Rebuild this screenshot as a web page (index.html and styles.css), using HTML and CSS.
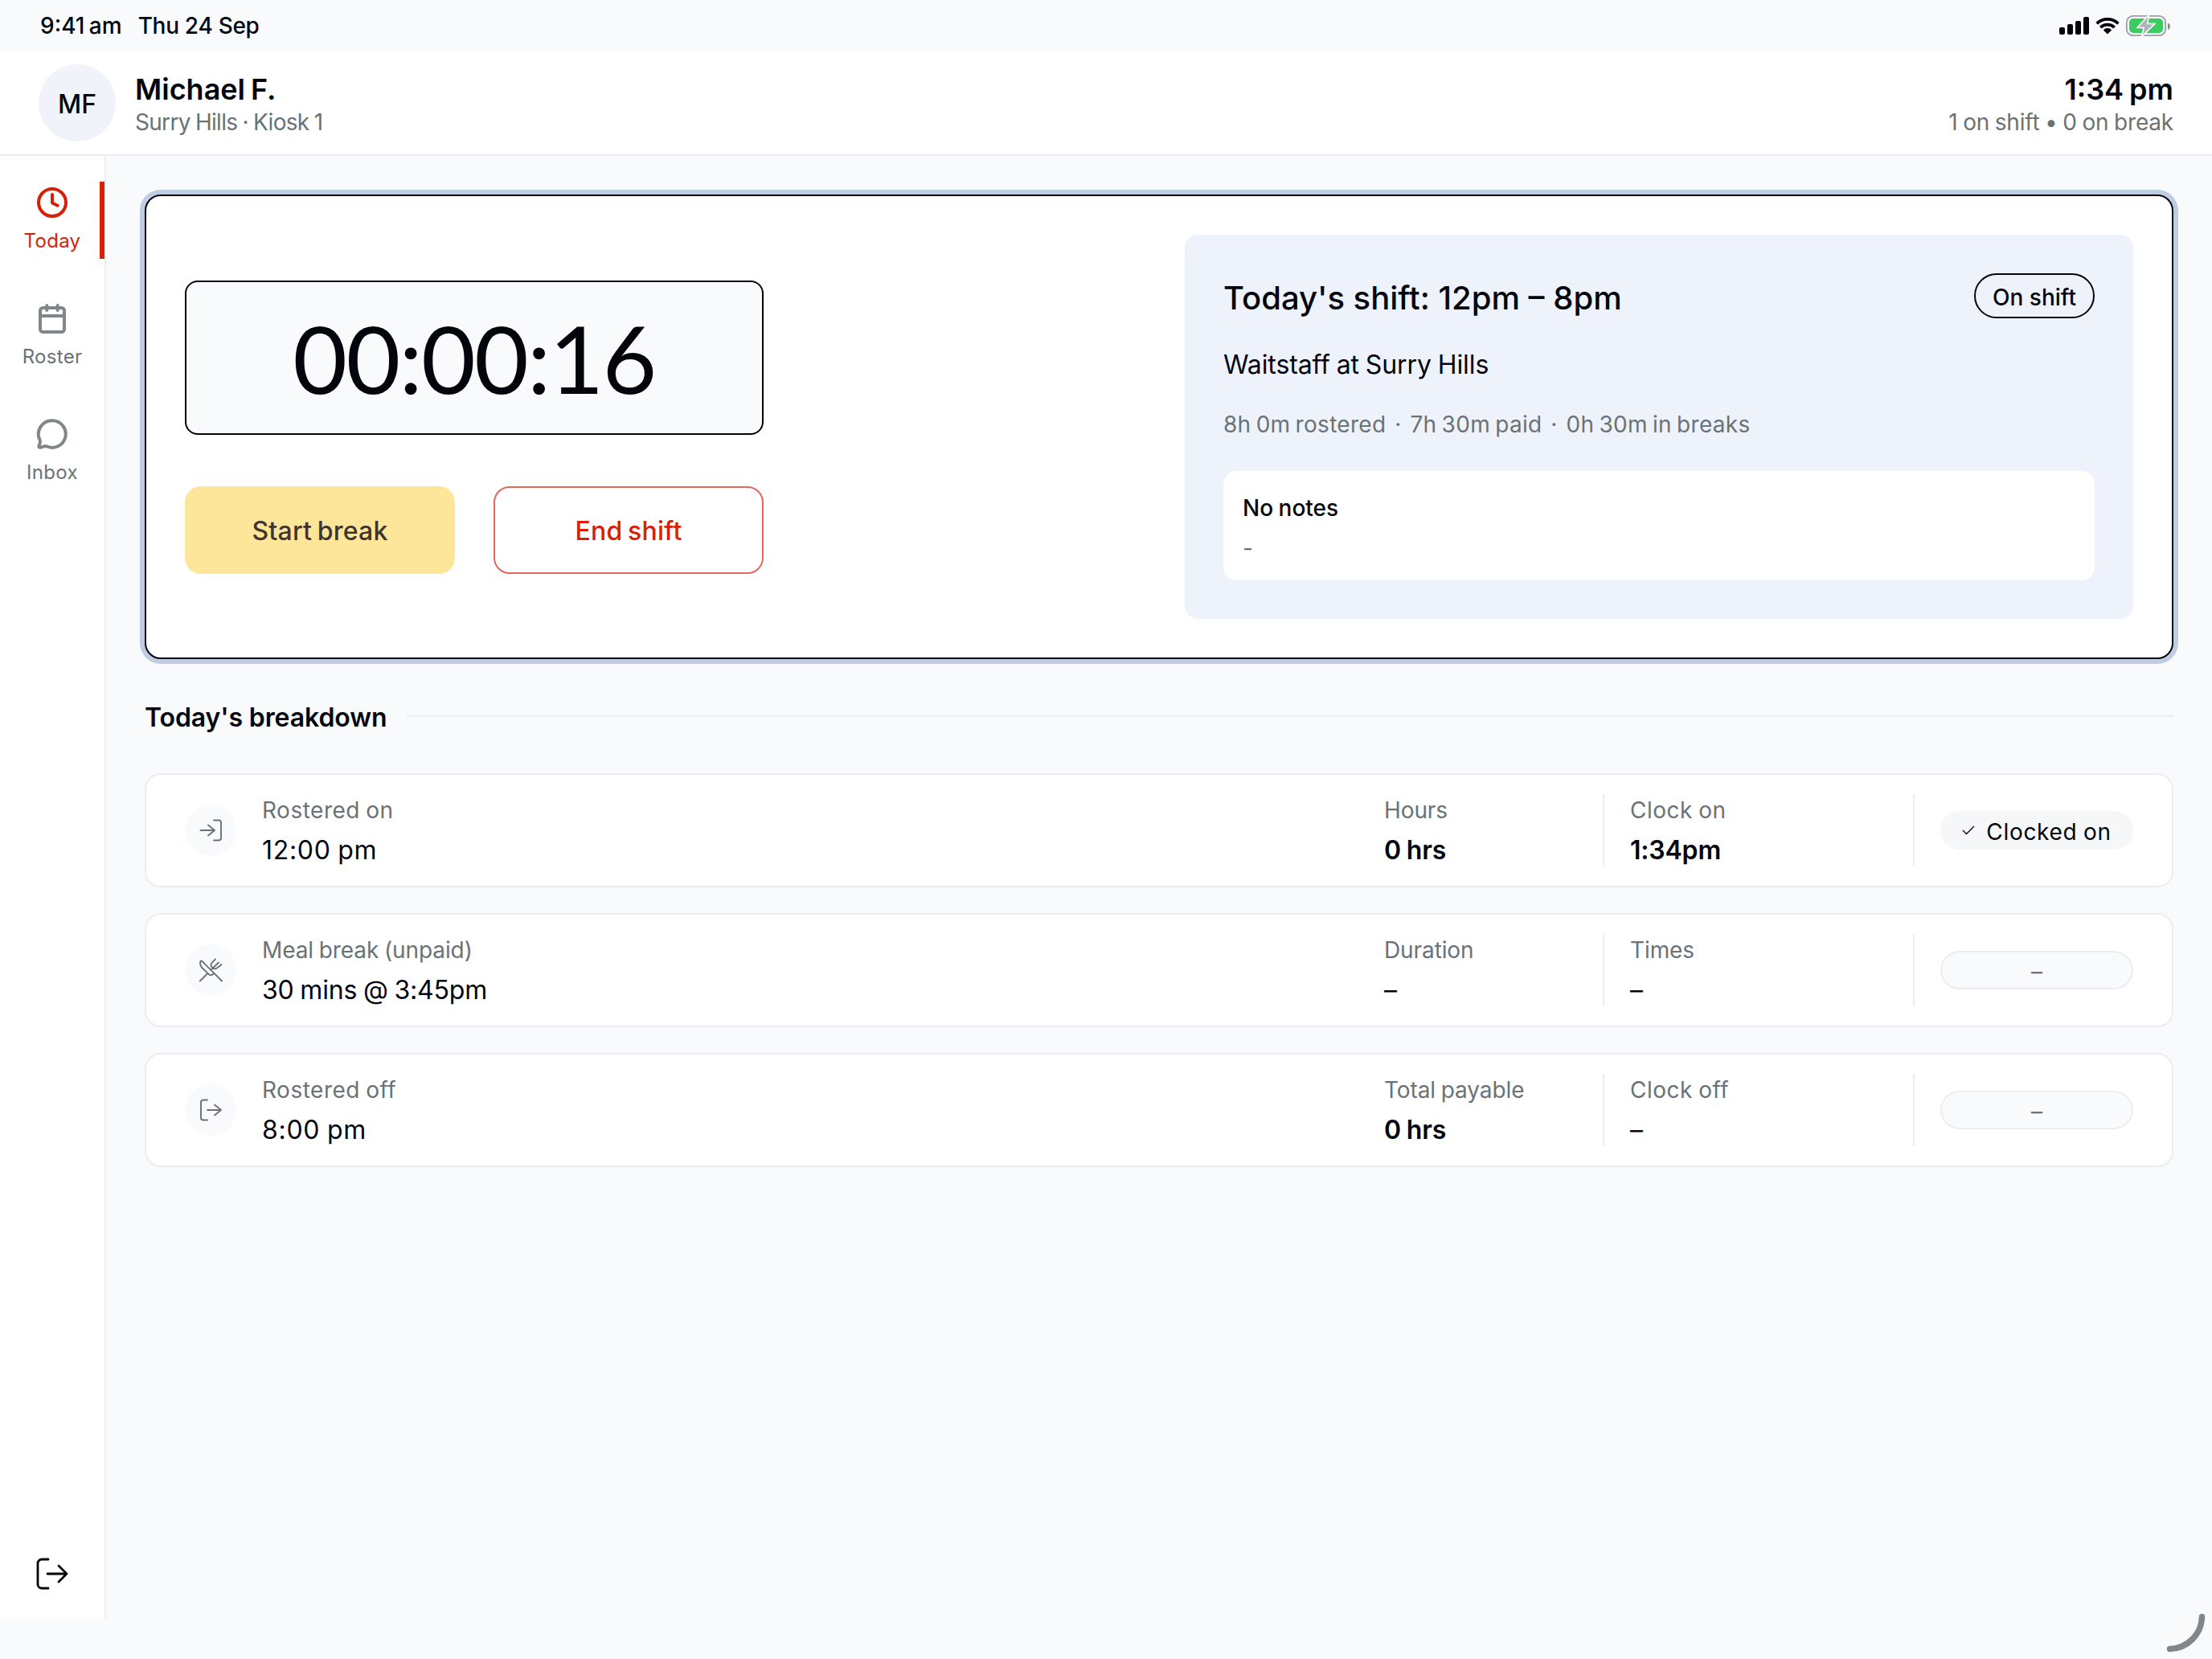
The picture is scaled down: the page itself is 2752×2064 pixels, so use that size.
FILE: index.html
```html
<!DOCTYPE html>
<html lang="en">
<head>
  <meta charset="UTF-8" />
  <meta name="viewport" content="width=device-width, initial-scale=1.0" />
  <title>Kiosk - Today</title>
  <link rel="stylesheet" href="styles.css">
</head>
<body>
  <div class="status-bar">
    <div class="status-left">
      <span class="status-time">9:41 am</span>
      <span class="status-date">Thu 24 Sep</span>
    </div>
    <svg class="status-icons" width="140" height="30" viewBox="0 0 140 30">
      <g fill="#03050d">
        <rect x="2" y="17" width="7" height="9" rx="2" />
        <rect x="12" y="13" width="7" height="13" rx="2" />
        <rect x="22" y="9" width="7" height="17" rx="2" />
        <rect x="32" y="4" width="7" height="22" rx="2" />
        <path d="M62 25l-4.8-4.6a7 7 0 0 1 9.6 0z" stroke="#03050d" stroke-width="1" stroke-linejoin="round" />
      </g>
      <g fill="none" stroke="#03050d" stroke-width="3.8">
        <path d="M48.7 12.4a19 19 0 0 1 26.6 0" />
        <path d="M53.3 17.2a12.5 12.5 0 0 1 17.4 0" />
      </g>
      <rect x="85.8" y="2.8" width="48.4" height="24.4" rx="8" fill="none" stroke="#9a9fa3" stroke-width="1.8" />
      <rect x="89" y="6" width="42" height="18" rx="5" fill="#3ccb5f" />
      <path d="M137 11.5a4.6 4.6 0 0 1 0 8.5z" fill="#85898c" />
      <path d="M113.500 1.500L99 17.500h8L104.500 28.500 121 12.500h-9z" fill="#afb4b8" stroke="#fff" stroke-width="1.6" />
    </svg>
  </div>

  <header class="header">
    <div class="avatar">MF</div>
    <div class="user">
      <div class="user-name">Michael F.</div>
      <div class="user-site">Surry Hills · Kiosk 1</div>
    </div>
    <div class="clock">
      <div class="clock-time">1:34 pm</div>
      <div class="clock-info">1 on shift • 0 on break</div>
    </div>
  </header>

  <div class="body">
    <nav class="sidebar">
      <a class="nav-item active">
        <svg width="40" height="40" viewBox="0 0 40 40">
          <circle cx="20" cy="20" r="17" />
          <path d="M20 10v10.500l6.700 3.200" />
        </svg>
        <span>Today</span>
      </a>
      <a class="nav-item">
        <svg width="40" height="40" viewBox="0 0 40 40">
          <rect x="5" y="7" width="30" height="30" rx="3.500" />
          <path d="M5 17h30M13.300 4v6M26.700 4v6" />
        </svg>
        <span>Roster</span>
      </a>
      <a class="nav-item">
        <svg width="40" height="40" viewBox="0 0 40 40">
          <path d="M20 3.200A16.800 16.800 0 1 1 13 35.300c-2.800-1-5.300 1.400-8.400 1.400-1 0-1.500-.8-1.100-1.800 1.200-2.700 1.900-4.700 1.200-7.200A16.800 16.800 0 0 1 20 3.200z" />
        </svg>
        <span>Inbox</span>
      </a>
      <a class="logout">
        <svg width="44" height="44" viewBox="0 0 44 44">
          <path d="M17 4H9a5 5 0 0 0-5 5v26a5 5 0 0 0 5 5h8M16 22h24M30 12l10 10-10 10" />
        </svg>
      </a>
    </nav>

    <main class="main">
      <section class="shift-card">
        <div class="timer">
          <div class="timer-box">00:00:16</div>
          <div class="timer-buttons">
            <button class="btn btn-break">Start break</button>
            <button class="btn btn-end">End shift</button>
          </div>
        </div>
        <div class="shift">
          <div class="shift-head">
            <h2>Today's shift: 12pm – 8pm</h2>
            <span class="badge">On shift</span>
          </div>
          <div class="shift-role">Waitstaff at Surry Hills</div>
          <div class="shift-stats">
            <span>8h 0m rostered</span><i>·</i><span>7h 30m paid</span><i>·</i><span>0h 30m in breaks</span>
          </div>
          <div class="notes">
            <div class="notes-title">No notes</div>
            <div class="notes-text">-</div>
          </div>
        </div>
      </section>

      <div class="section-title">
        <h3>Today's breakdown</h3>
        <hr>
      </div>

      <div class="rows">
        <div class="row">
          <div class="row-icon">
            <svg width="32" height="32" viewBox="0 0 32 32">
              <path d="M3.500 16h17.500M13 9.500l8 6.500-8 6.500M20 3.500h6a3 3 0 0 1 3 3v19a3 3 0 0 1-3 3h-6" />
            </svg>
          </div>
          <div class="cell cell-name wide">
            <div class="label">Rostered on</div>
            <div class="value">12:00 pm</div>
          </div>
          <div class="cell cell-hours">
            <div class="label">Hours</div>
            <div class="value bold">0 hrs</div>
          </div>
          <div class="cell cell-clock wide">
            <div class="label">Clock on</div>
            <div class="value bold">1:34pm</div>
          </div>
          <div class="cell cell-status">
            <div class="pill pill-done">
              <svg width="16" height="12" viewBox="0 0 16 12"><path d="M1 6l4.500 4.500L15 1" /></svg>
              <span>Clocked on</span>
            </div>
          </div>
        </div>

        <div class="row">
          <div class="row-icon">
            <svg width="32" height="32" viewBox="0 0 32 32">
              <path d="M30 29.500L5.500 5C4.500 4 3.600 4.400 3.300 5.500c-.7 2.800 0 5.200 1.900 7.300l8.400 8.200c1.600 1.600 4.500 1.600 6-.8M2.800 29.500l8.500-8.500M16.300 15.700L26 6.500M22 2.300l-4.200 4.200c-2 2.300-1.600 4.800.4 6.500 2.200 1.800 4.600 1.600 6.800-.4l4.500-3.600" />
            </svg>
          </div>
          <div class="cell cell-name">
            <div class="label">Meal break (unpaid)</div>
            <div class="value">30 mins @ 3:45pm</div>
          </div>
          <div class="cell cell-hours">
            <div class="label">Duration</div>
            <div class="value">–</div>
          </div>
          <div class="cell cell-clock">
            <div class="label">Times</div>
            <div class="value">–</div>
          </div>
          <div class="cell cell-status">
            <div class="pill">–</div>
          </div>
        </div>

        <div class="row">
          <div class="row-icon">
            <svg width="32" height="32" viewBox="0 0 32 32">
              <path d="M12 3.500H7a3 3 0 0 0-3 3v19a3 3 0 0 0 3 3h5M12 16h17M21 9.500l8 6.500-8 6.500" />
            </svg>
          </div>
          <div class="cell cell-name wide">
            <div class="label">Rostered off</div>
            <div class="value">8:00 pm</div>
          </div>
          <div class="cell cell-hours">
            <div class="label">Total payable</div>
            <div class="value bold">0 hrs</div>
          </div>
          <div class="cell cell-clock wide">
            <div class="label">Clock off</div>
            <div class="value">–</div>
          </div>
          <div class="cell cell-status">
            <div class="pill">–</div>
          </div>
        </div>
      </div>
    </main>
  </div>

  <svg class="corner" width="60" height="60" viewBox="0 0 60 60">
    <path d="M7.500 47.500A41 41 0 0 0 47.500 7.500" />
  </svg>
</body>
</html>
```
FILE: styles.css
```css
* {
  box-sizing: border-box;
}
body {
  margin: 0;
  height: 2064px;
  position: relative;
  overflow: hidden;
  background: #f9fafc;
  color: #03050d;
  font-family: Inter, "Noto Sans", sans-serif;
  font-size: 28px;
}
h2, h3 {
  margin: 0;
}
svg {
  display: block;
  flex-shrink: 0;
}

/* status bar */
.status-bar {
  height: 64px;
  padding: 0 52px 0 50px;
  display: flex;
  align-items: center;
  justify-content: space-between;
  font-weight: 500;
}
.status-left {
  display: flex;
  gap: 20px;
}
.status-time {
  word-spacing: -2px;
}
.status-date {
  letter-spacing: -0.3px;
}

/* header */
.header {
  height: 130px;
  padding: 0 48px;
  display: flex;
  align-items: center;
  background: #fff;
  border-bottom: 2px solid #ebedf0;
}
.avatar {
  width: 96px;
  height: 96px;
  border-radius: 50%;
  background: #f0f3fa;
  display: flex;
  align-items: center;
  justify-content: center;
  padding-top: 2px;
  font-size: 32px;
  font-weight: 500;
}
.user {
  margin-left: 24px;
}
.user-name, .clock-time {
  font-size: 36px;
  font-weight: 600;
  line-height: 48px;
  word-spacing: -2px;
}
.user-site, .clock-info {
  line-height: 34px;
  color: #6a7276;
}
.user-site {
  letter-spacing: -0.7px;
  word-spacing: -1px;
}
.clock {
  margin-left: auto;
  text-align: right;
}
.clock-info {
  letter-spacing: -0.2px;
  word-spacing: -1px;
}

/* layout */
.body {
  display: flex;
  height: 1820px;
}
.sidebar {
  width: 132px;
  padding: 32px 0 34px;
  display: flex;
  flex-direction: column;
  gap: 48px;
  background: #fff;
  border-right: 2px solid #ebedf0;
}
.nav-item {
  height: 96px;
  padding-top: 6px;
  display: flex;
  flex-direction: column;
  align-items: center;
  gap: 13px;
  font-size: 24px;
  line-height: 30px;
  letter-spacing: 0.3px;
  color: #6a7276;
}
.nav-item svg {
  fill: none;
  stroke: #80878b;
  stroke-width: 4;
  stroke-linecap: round;
  stroke-linejoin: round;
}
.nav-item.active {
  color: #d62108;
  border-right: 6px solid #d62108;
  padding-left: 6px;
}
.nav-item.active svg {
  stroke: #d62108;
}
.logout {
  margin-top: auto;
  padding-left: 43px;
}
.logout svg {
  fill: none;
  stroke: #03050d;
  stroke-width: 2.8;
  stroke-linecap: round;
  stroke-linejoin: round;
}
.main {
  flex: 1;
  padding: 48px;
}

/* current shift */
.shift-card {
  height: 578px;
  padding: 48px;
  display: flex;
  align-items: center;
  justify-content: space-between;
  background: #fff;
  border: 2px solid #03050d;
  border-radius: 20px;
  box-shadow: 0 0 0 6px #bfcde3;
}
.timer {
  width: 720px;
}
.timer-box {
  height: 192px;
  text-align: center;
  font-family: Lato, sans-serif;
  font-size: 117px;
  line-height: 188px;
  letter-spacing: -1.8px;
  background: #f9fafc;
  border: 2px solid #03050d;
  border-radius: 16px;
}
.timer-buttons {
  margin-top: 64px;
  display: flex;
  gap: 48px;
}
.btn {
  width: 336px;
  height: 109px;
  padding-top: 4px;
  border: none;
  border-radius: 20px;
  font-family: inherit;
  font-size: 32px;
  font-weight: 500;
  word-spacing: -2px;
  letter-spacing: 0.2px;
}
.btn-break {
  background: #fde69a;
  color: #40342f;
}
.btn-end {
  background: #fff;
  color: #d62108;
  border: 2px solid #e06860;
}
.shift {
  width: 1180px;
  height: 478px;
  padding: 48px;
  background: #eef2fb;
  border-radius: 16px;
}
.shift-head {
  display: flex;
  align-items: center;
  justify-content: space-between;
}
.shift-head h2 {
  padding-top: 5px;
  font-size: 40px;
  line-height: 48px;
  font-weight: 550;
}
.badge {
  width: 150px;
  height: 56px;
  border: 2px solid #03050d;
  border-radius: 28px;
  text-align: center;
  line-height: 56px;
  font-weight: 450;
}
.shift-role {
  margin-top: 37px;
  font-size: 32px;
  line-height: 42px;
  font-weight: 400;
  letter-spacing: -0.1px;
  word-spacing: -1px;
}
.shift-stats {
  display: flex;
  margin-top: 35px;
  line-height: 36px;
  color: #6a7276;
  letter-spacing: 0.3px;
  word-spacing: -2px;
}
.shift-stats i {
  width: 30px;
  text-align: center;
  font-style: normal;
}
.notes {
  height: 136px;
  margin-top: 40px;
  padding: 28px 24px;
  background: #fff;
  border-radius: 16px;
}
.notes-title {
  line-height: 36px;
  font-weight: 450;
  word-spacing: -1px;
}
.notes-text {
  margin-top: 14px;
  line-height: 36px;
  color: #6a7276;
}

/* breakdown */
.section-title {
  margin: 47px 0;
  display: flex;
  align-items: center;
  gap: 24px;
}
.section-title h3 {
  width: 302px;
  padding-top: 4px;
  font-size: 32px;
  line-height: 44px;
  font-weight: 600;
  letter-spacing: -0.1px;
  white-space: nowrap;
}
.section-title hr {
  flex: 1;
  margin: 0;
  border: none;
  height: 2px;
  background: #ebedf0;
}
.rows {
  display: flex;
  flex-direction: column;
  gap: 32px;
}
.row {
  height: 142px;
  padding: 24px 48px;
  display: flex;
  align-items: center;
  background: #fff;
  border: 2px solid #ebedf0;
  border-radius: 20px;
}
.row-icon {
  width: 64px;
  height: 64px;
  border-radius: 50%;
  background: #f9fafc;
  display: flex;
  align-items: center;
  justify-content: center;
}
.row-icon svg {
  fill: none;
  stroke: #6a7276;
  stroke-width: 1.9;
  stroke-linecap: round;
  stroke-linejoin: round;
}
.cell {
  height: 90px;
}
.cell-name {
  flex: 1;
  padding-left: 32px;
}
.cell-hours {
  width: 272px;
}
.cell-clock {
  width: 386px;
  padding-left: 32px;
  border-left: 2px solid #ebedf0;
}
.cell-status {
  width: 274px;
  padding-left: 32px;
  border-left: 2px solid #ebedf0;
  display: flex;
  align-items: center;
}
.label {
  line-height: 40px;
  color: #6a7276;
  letter-spacing: -0.1px;
  word-spacing: -1px;
}
.wide .label {
  letter-spacing: 0.5px;
}
.value {
  margin-top: 8px;
  font-size: 32px;
  line-height: 44px;
  letter-spacing: -0.2px;
  word-spacing: -1px;
}
.wide .value {
  letter-spacing: 0.7px;
}
.cell .value.bold {
  font-weight: 600;
  letter-spacing: -0.2px;
}
.pill {
  width: 240px;
  height: 48px;
  border: 2px solid #ebedf0;
  border-radius: 24px;
  background: #f9fafc;
  color: #6a7276;
  display: flex;
  align-items: center;
  justify-content: center;
  padding-top: 4px;
}
.pill-done {
  border: none;
  background: #f6f7f9;
  color: #03050d;
  gap: 14px;
  letter-spacing: 0.7px;
  word-spacing: -1px;
}
.pill svg {
  margin-top: -4px;
  fill: none;
  stroke: #03050d;
  stroke-width: 1.3;
}

/* resize mark in the screen corner */
.corner {
  position: absolute;
  right: 0;
  bottom: 0;
  fill: none;
  stroke: #80878b;
  stroke-width: 7.5;
  stroke-linecap: round;
}
```
